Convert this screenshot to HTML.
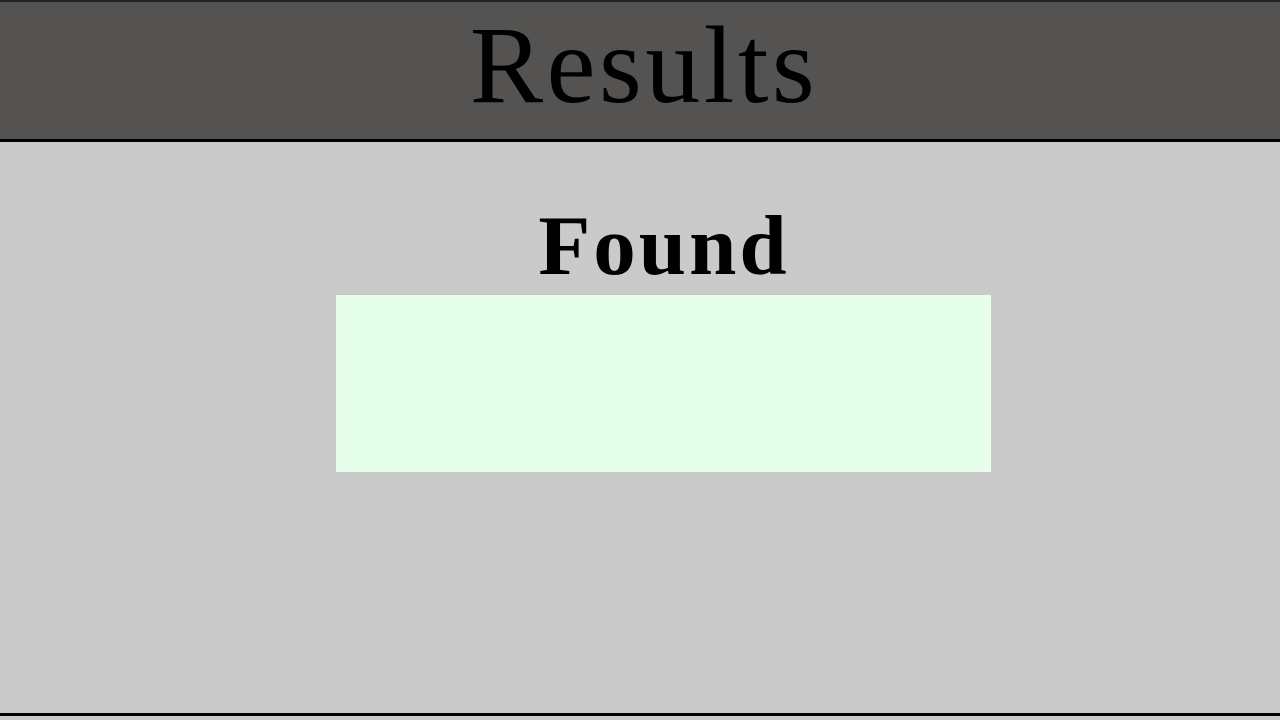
<!DOCTYPE html>
<html><head><style>
html,body{margin:0;padding:0;width:1280px;height:720px;overflow:hidden;background:#cacaca;font-family:"Liberation Serif",serif;}
.hdr{position:absolute;left:0;top:0;width:1280px;height:139px;background:#545351;border-top:2px solid #222;box-sizing:border-box;border-bottom:none;}
.line{position:absolute;left:0;top:139px;width:1280px;height:3px;background:#000;}
.t1{position:absolute;left:0;top:0;width:1288px;text-align:center;font-size:110px;line-height:130px;letter-spacing:3.5px;color:#000;}
.t2{position:absolute;left:0;top:196px;width:1328px;text-align:center;font-size:85px;line-height:100px;font-weight:bold;letter-spacing:3px;color:#000;}
.box{position:absolute;left:336px;top:295px;width:655px;height:177px;background:#e5ffeb;}
.bot{position:absolute;left:0;top:713px;width:1280px;height:3px;background:#000;}
</style></head><body>
<div class="hdr"></div>
<div class="line"></div>
<div class="t1">Results</div>
<div class="t2">Found</div>
<div class="box"></div>
<div class="bot"></div>
</body></html>
